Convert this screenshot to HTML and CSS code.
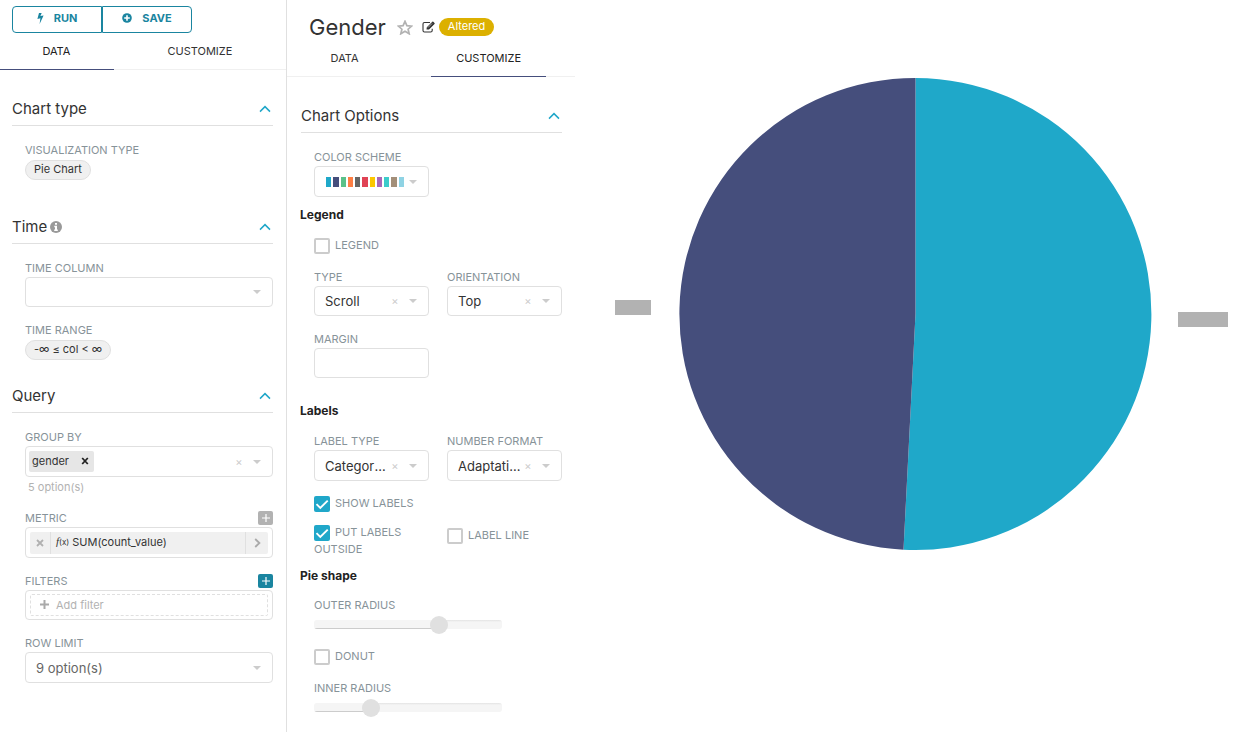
FILE: index.html
```html
<!DOCTYPE html>
<html lang="en">
<head>
<meta charset="utf-8">
<title>Gender</title>
<link rel="stylesheet" href="styles.css">
</head>
<body>
<svg class="sprite" aria-hidden="true">
  <symbol id="up" viewBox="0 0 12 8"><path d="M1 6.6 6 1.6l5 5" fill="none" stroke="currentColor" stroke-width="1.5"/></symbol>
  <symbol id="caret" viewBox="0 0 8 4"><path d="M0 0h8L4 4z" fill="currentColor"/></symbol>
  <symbol id="plus" viewBox="0 0 10 10"><path d="M5 1v8M1 5h8" fill="none" stroke="currentColor" stroke-width="1.2"/></symbol>
</svg>
<div class="page">
  <aside class="panel query-panel">
    <div class="actions">
      <button class="action" type="button"><svg width="7" height="11" viewBox="0 0 7 11"><path d="M2 0h2.7L3.4 3.1 6.6 2.6 2.6 11 3.4 5.2.4 5.9z" fill="currentColor"/></svg>RUN</button>
      <button class="action" type="button"><svg width="10" height="10" viewBox="0 0 10 10"><circle cx="5" cy="5" r="4.8" fill="currentColor"/><path d="M5 2.2v5.6M2.2 5h5.6" stroke="#fff" stroke-width="1.6"/></svg>SAVE</button>
    </div>
    <nav class="tabs" role="tablist">
      <button class="tab active" type="button" role="tab">DATA</button>
      <button class="tab" type="button" role="tab">CUSTOMIZE</button>
    </nav>
    <div class="sections">
      <section>
        <h2 class="section-head">Chart type<svg class="up"><use href="#up"/></svg></h2>
        <div class="body chart-type">
          <span class="label">VISUALIZATION TYPE</span>
          <button class="pill" type="button">Pie Chart</button>
        </div>
      </section>
      <section>
        <h2 class="section-head"><span class="title">Time<svg width="12" height="12" viewBox="0 0 12 12"><circle cx="6" cy="6" r="6" fill="#999"/><path d="M5 2h2v1.7H5zM4.3 4.8H7v3.7h.8V10H4.2V8.5H5V6.2h-.7z" fill="#fff"/></svg></span><svg class="up"><use href="#up"/></svg></h2>
        <div class="body stack">
          <div>
            <label class="label" for="time-column">TIME COLUMN</label>
            <div class="box"><select id="time-column"><option></option></select><svg class="caret"><use href="#caret"/></svg></div>
          </div>
          <div>
            <span class="label">TIME RANGE</span>
            <button class="pill" type="button">-∞ ≤ col &lt; ∞</button>
          </div>
        </div>
      </section>
      <section>
        <h2 class="section-head">Query<svg class="up"><use href="#up"/></svg></h2>
        <div class="body stack">
          <div>
            <span class="label">GROUP BY</span>
            <div class="box tall tags">
              <span class="tag">gender<button type="button" aria-label="Remove gender"><svg width="8" height="8" viewBox="0 0 8 8"><path d="M1.2 1 6.8 7M6.8 1 1.2 7" stroke="#222" stroke-width="1.8"/></svg></button></span>
              <button class="clear" type="button" aria-label="Clear">×</button><svg class="caret"><use href="#caret"/></svg>
            </div>
            <p class="hint">5 option(s)</p>
          </div>
          <div>
            <div class="label-row"><span class="label">METRIC</span><button class="add" type="button" aria-label="Add metric"><svg width="10" height="10"><use href="#plus"/></svg></button></div>
            <div class="box tall inset">
              <div class="metric">
                <button class="metric-remove" type="button" aria-label="Remove metric"><svg width="8" height="8" viewBox="0 0 8 8"><path d="M1 1l6 6M7 1 1 7" stroke="#b0b0b0" stroke-width="1.8"/></svg></button>
                <span class="metric-name"><span class="fx"><i>f</i>(x)</span>SUM(count_value)</span>
                <button class="metric-open" type="button" aria-label="Edit metric"><svg width="7" height="10" viewBox="0 0 7 10"><path d="M1.2 1 5.4 5 1.2 9" fill="none" stroke="#aaa" stroke-width="1.8"/></svg></button>
              </div>
            </div>
          </div>
          <div>
            <div class="label-row"><span class="label">FILTERS</span><button class="add primary" type="button" aria-label="New filter"><svg width="10" height="10"><use href="#plus"/></svg></button></div>
            <div class="box inset">
              <button class="add-filter" type="button"><svg width="9" height="9" viewBox="0 0 9 9"><path d="M4.5 0v9M0 4.5h9" stroke="#aaa" stroke-width="2"/></svg>Add filter</button>
            </div>
          </div>
          <div>
            <label class="label" for="row-limit">ROW LIMIT</label>
            <div class="box tall muted"><select id="row-limit"><option>9 option(s)</option></select><svg class="caret"><use href="#caret"/></svg></div>
          </div>
        </div>
      </section>
    </div>
  </aside>

  <main class="panel">
    <header class="chart-header">
      <h1>Gender</h1>
      <button class="icon-button star" type="button" aria-label="Favorite"><svg width="16" height="15" viewBox="0 0 16 15"><path d="M8 1.3l1.9 4.3 4.8.5-3.6 3.1 1.1 4.6L8 11.3l-4.2 2.5 1.1-4.6L1.300 6.100l4.800-.5z" fill="none" stroke="#b2b2b2" stroke-width="1.7"/></svg></button>
      <button class="icon-button edit" type="button" aria-label="Edit"><svg width="13" height="12" viewBox="0 0 13 12"><path d="M8 1.500H2.500Q1 1.500 1 3v6.500Q1 11 2.500 11h6.200q1.500 0 1.500-1.500V7.800" fill="none" stroke="#333" stroke-width="1.100"/><path d="M4.500 8.600 4.800 6.200 10.300.7q.5-.5 1 0l1.200 1.200q.5.500 0 1L7 8.400z" fill="#333"/><path d="M6 6.500 10 2.500" stroke="#fff" stroke-width=".6"/></svg></button>
      <span class="badge">Altered</span>
    </header>
    <nav class="tabs" role="tablist">
      <button class="tab" type="button" role="tab">DATA</button>
      <button class="tab active" type="button" role="tab">CUSTOMIZE</button>
    </nav>
    <div class="sections">
      <section>
        <h2 class="section-head">Chart Options<svg class="up"><use href="#up"/></svg></h2>
        <div class="body">
          <div class="grid">
            <div>
              <span class="label">COLOR SCHEME</span>
              <button class="box tall scheme" type="button" aria-label="Color scheme">
                <span class="swatches"><i class="c1"></i><i class="c2"></i><i class="c3"></i><i class="c4"></i><i class="c5"></i><i class="c6"></i><i class="c7"></i><i class="c8"></i><i class="c9"></i><i class="c10"></i><i class="c11"></i></span>
                <svg class="caret"><use href="#caret"/></svg>
              </button>
            </div>
          </div>
          <h3>Legend</h3>
          <div class="grid legend-grid">
            <label class="check wide"><input type="checkbox">LEGEND</label>
            <div>
              <label class="label" for="type">TYPE</label>
              <div class="box"><select id="type"><option>Scroll</option></select><button class="clear" type="button" aria-label="Clear">×</button><svg class="caret"><use href="#caret"/></svg></div>
            </div>
            <div>
              <label class="label" for="orientation">ORIENTATION</label>
              <div class="box"><select id="orientation"><option>Top</option></select><button class="clear" type="button" aria-label="Clear">×</button><svg class="caret"><use href="#caret"/></svg></div>
            </div>
            <div>
              <label class="label" for="margin">MARGIN</label>
              <input class="box" id="margin" type="text">
            </div>
          </div>
          <h3>Labels</h3>
          <div class="grid labels-grid">
            <div>
              <label class="label" for="label-type">LABEL TYPE</label>
              <div class="box tall"><select id="label-type"><option>Category Name</option></select><button class="clear" type="button" aria-label="Clear">×</button><svg class="caret"><use href="#caret"/></svg></div>
            </div>
            <div>
              <label class="label" for="number-format">NUMBER FORMAT</label>
              <div class="box tall"><select id="number-format"><option>Adaptative formatting</option></select><button class="clear" type="button" aria-label="Clear">×</button><svg class="caret"><use href="#caret"/></svg></div>
            </div>
            <label class="check wide"><input type="checkbox" checked>SHOW LABELS</label>
            <label class="check"><input type="checkbox" checked>PUT LABELS OUTSIDE</label>
            <label class="check lowered"><input type="checkbox">LABEL LINE</label>
          </div>
          <h3>Pie shape</h3>
          <div class="shape">
            <label class="label" for="outer">OUTER RADIUS</label>
            <input class="slider" id="outer" type="range" value="68" style="--fill: 68%">
            <label class="check"><input type="checkbox">DONUT</label>
            <label class="label" for="inner">INNER RADIUS</label>
            <input class="slider" id="inner" type="range" value="28" style="--fill: 28%">
          </div>
        </div>
      </section>
    </div>
  </main>

  <figure class="chart">
    <svg viewBox="0 0 662 732" role="img" aria-label="Pie chart by gender">
      <path d="M340.500 314V78A236 236 0 1 1 328.500 549.700Z" fill="#1fa8c9"/>
      <path d="M340.500 314 328.500 549.700A236 236 0 0 1 340.500 78Z" fill="#454e7c"/>
      <rect x="40" y="300" width="36" height="15" fill="#b2b2b2"/>
      <rect x="603" y="312" width="50" height="15" fill="#b2b2b2"/>
    </svg>
  </figure>
</div>
</body>
</html>
```
FILE: styles.css
```css
* { box-sizing: border-box; }

body {
  margin: 0;
  background: #fff;
  color: #333;
  font: 11px/16px Inter, "Liberation Sans", sans-serif;
}

h1, h2, h3, p, figure { margin: 0; font-weight: 400; }

button, select, input { margin: 0; font: inherit; color: inherit; }

button { padding: 0; border: 0; background: none; cursor: pointer; }

svg { flex: none; display: block; }

.sprite { display: none; }

.page {
  display: grid;
  grid-template-columns: minmax(240px, 287fr) minmax(240px, 288fr) 662fr;
  min-height: 100vh;
}

.query-panel { border-right: 1px solid #e0e0e0; }

/* Run / save */
.actions { display: flex; padding: 6px 0 0 12px; }

.action {
  display: flex;
  align-items: center;
  justify-content: center;
  gap: 10px;
  width: 90px;
  height: 27px;
  padding-bottom: 3px;
  border: 1px solid #1a85a0;
  border-radius: 4px 0 0 4px;
  color: #1a85a0;
  font-weight: 700;
}

.action + .action { border-radius: 0 4px 4px 0; }

/* Tabs */
.tabs { display: flex; border-bottom: 1px solid #f0f0f0; }

.query-panel .tabs { margin-left: -1px; }

.tab {
  width: 40%;
  margin: 0 10% -1px 0;
  padding: 10px 0;
  border-bottom: 1px solid transparent;
}

.tab.active { border-color: #454e7c; color: #222; }

/* Sections */
.sections { padding: 28px 13px 0 12px; }

.panel:not(.query-panel) .sections { padding-left: 14px; }

section + section { margin-top: 25px; }

.section-head {
  display: flex;
  align-items: center;
  justify-content: space-between;
  padding-bottom: 5px;
  border-bottom: 1px solid #e0e0e0;
  font-size: 15px;
  line-height: 22px;
}

.title { display: flex; align-items: center; gap: 3px; }

.up { width: 12px; height: 8px; margin-right: 2px; color: #20a7c9; }

.body { padding: 15px 0 0 13px; }

.chart-type { padding-bottom: 11px; }

.stack { display: flex; flex-direction: column; gap: 14px; }

.label { display: block; color: #879399; line-height: 18px; }

.label-row { display: flex; justify-content: space-between; }

.pill {
  height: 20px;
  margin-top: 1px;
  padding: 0 8px 2px;
  border: 1px solid #e0e0e0;
  border-radius: 10px;
  background: #f0f0f0;
  display: block;
}

/* Field boxes */
.box {
  display: flex;
  align-items: center;
  width: 100%;
  height: 30px;
  padding: 0 11px 0 10px;
  border: 1px solid #e0e0e0;
  border-radius: 4px;
  background: #fff;
  font-size: 13px;
}

.box.tall { height: 31px; }

.box select {
  flex: 1;
  min-width: 0;
  padding: 0;
  border: 0;
  outline: 0;
  background: none;
  appearance: none;
  overflow: hidden;
  text-overflow: ellipsis;
  white-space: nowrap;
}

.muted { color: #666; }

.caret { width: 8px; height: 4px; color: #ccc; }

.clear { width: 10px; margin: 0 9px 0 0; color: #ccc; font-size: 11px; }

.tags { padding-left: 3px; }

.tag {
  display: flex;
  align-items: center;
  gap: 12px;
  height: 21px;
  margin-right: auto;
  padding: 0 5px 1px 3px;
  border-radius: 2px;
  background: #e6e6e6;
  font-size: 11px;
}

.hint { padding: 1px 3px 0; color: #b2b2b2; line-height: 18px; margin-bottom: -1px; }

.add {
  display: grid;
  place-items: center;
  width: 15px;
  height: 14px;
  margin-top: 2px;
  border-radius: 2px;
  background: #b2b2b2;
  color: #fff;
}

.add.primary { background: #1a85a0; }

.box.inset { padding: 0 4px; font-size: 11px; }

.metric {
  display: flex;
  flex: 1;
  height: 22px;
  border-radius: 2px;
  background: #f0f0f0;
}

.metric-remove, .metric-open { display: grid; place-items: center; width: 21px; }

.metric-remove { border-right: 1px solid #e0e0e0; }

.metric-open { width: 23px; border-left: 1px solid #e0e0e0; }

.metric-name { display: flex; flex: 1; gap: 3px; padding: 2px 5px; }

.fx { font-size: 8px; line-height: 14px; }

.fx i { font: italic 11px/14px "Liberation Serif", serif; }

.add-filter {
  display: flex;
  flex: 1;
  align-items: center;
  gap: 7px;
  height: 22px;
  padding: 0 9px 1px;
  border: 1px dashed #e0e0e0;
  border-radius: 2px;
  color: #b2b2b2;
}

/* Chart header */
.chart-header { display: flex; align-items: center; padding: 14px 0 0 22px; }

h1 { font-size: 22px; line-height: 26px; }

.star { margin-left: 11px; }

.edit { margin-left: 9px; }

.badge {
  margin-left: 4px;
  padding: 0 9px 2px;
  border-radius: 9px;
  background: #dcb000;
  color: #fff;
}

/* Customize form */
.grid {
  display: grid;
  grid-template-columns: repeat(2, minmax(0, 1fr));
  gap: 14px 18px;
}

h3 {
  margin: 8px 0 11px -14px;
  color: #222;
  font-size: 12px;
  font-weight: 700;
  line-height: 20px;
}

.legend-grid { padding: 1px 0 15px; }

.labels-grid { row-gap: 12px; padding-bottom: 1px; }

.labels-grid .wide { margin-top: 2px; }

.scheme { justify-content: space-between; }

.swatches { display: flex; gap: 2px; width: 79px; padding-left: 1px; }

.swatches i { flex: 1; height: 10px; }

.c1 { background: #1fa8c9; }
.c2 { background: #454e7c; }
.c3 { background: #5ac189; }
.c4 { background: #ff7f44; }
.c5 { background: #666; }
.c6 { background: #e04355; }
.c7 { background: #fcc700; }
.c8 { background: #a868b7; }
.c9 { background: #3cccCB; }
.c10 { background: #a38f79; }
.c11 { background: #8fd3e4; }

.check { color: #879399; line-height: 16px; }

.check input {
  width: 16px;
  height: 16px;
  margin: 1px 5px 0 0;
  border: 2px solid #ccc;
  border-radius: 2px;
  background: #fff;
  appearance: none;
  vertical-align: top;
}

.check input:checked {
  border: 0;
  background: #20a7c9 url("data:image/svg+xml,%3Csvg xmlns='http://www.w3.org/2000/svg' viewBox='0 0 16 16'%3E%3Cpath d='M2.500 8.200 6.300 12 13.700 4.600' fill='none' stroke='white' stroke-width='1.900'/%3E%3C/svg%3E");
}

.wide { grid-column: 1 / -1; }

.lowered { padding-top: 3px; }

.shape { display: flex; flex-direction: column; margin-top: -1px; }

.shape .check { margin: 14px 0; }

.slider {
  width: 76%;
  height: 20px;
  background: none;
  appearance: none;
}

.slider::-webkit-slider-runnable-track {
  height: 9px;
  border-radius: 3px;
  background: linear-gradient(#ccc, #ccc) 0 100% / var(--fill) 1px no-repeat, linear-gradient(to right, #f5f5f5, #f5f5f5) 0 0 / var(--fill) 100% no-repeat, linear-gradient(#e3e3e3, #f5f5f5 2px);
}

.slider::-webkit-slider-thumb {
  width: 18px;
  height: 18px;
  margin-top: -4px;
  border-radius: 50%;
  background: #e0e0e0;
  appearance: none;
}

/* Pie */
.chart svg { width: 100%; height: 100vh; }
```
